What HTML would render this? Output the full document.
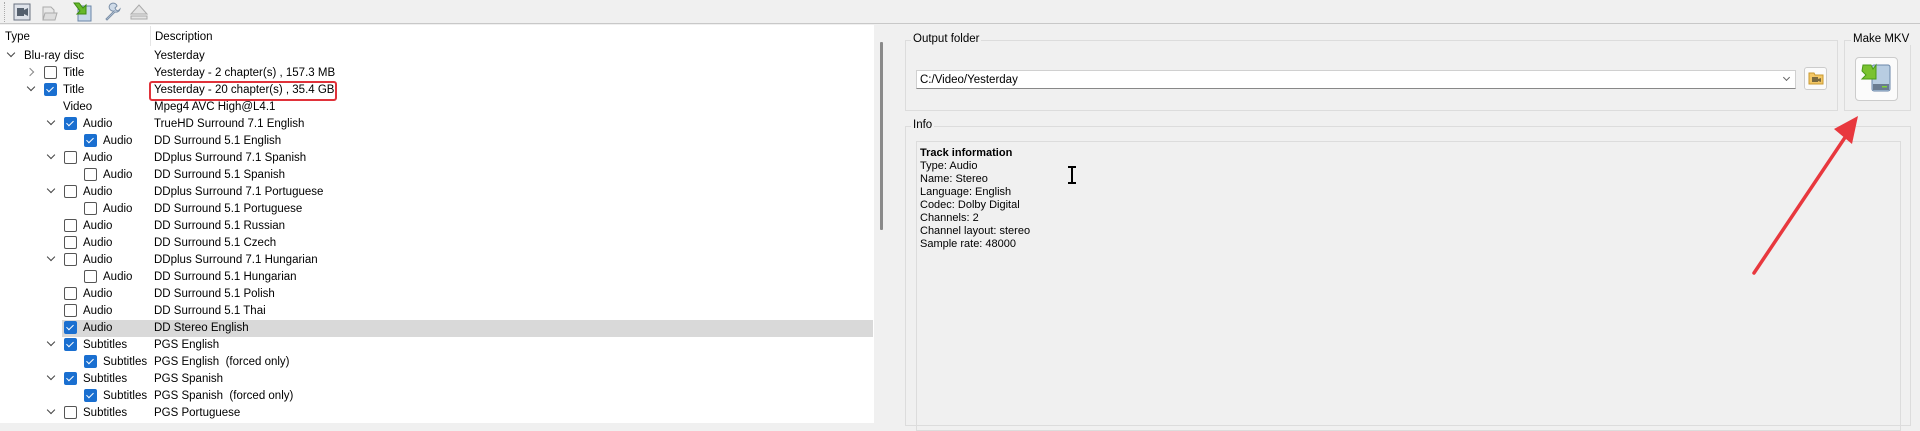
<!DOCTYPE html>
<html><head><meta charset="utf-8"><style>
*{margin:0;padding:0;box-sizing:border-box}
body{width:1920px;height:423px;overflow:hidden;background:#f0f0f0;font-family:"Liberation Sans",sans-serif;font-size:11.5px;color:#000;position:relative}
.a{position:absolute;white-space:nowrap}
.cb{position:absolute;width:13px;height:13px;border:1px solid #555;border-radius:2px;background:#fff;margin-top:-2px}
.cb.c{background:#1a6fd0;border-color:#1a6fd0}
.cb.c:after{content:"";position:absolute;left:3px;top:1px;width:3px;height:6px;border:solid #fff;border-width:0 1.5px 1.5px 0;transform:rotate(45deg)}
.chv{position:absolute;width:6px;height:6px;border:solid #444;border-width:0 1.3px 1.3px 0;transform:rotate(45deg)}
.chr{position:absolute;width:6px;height:6px;border:solid #888;border-width:0 1.3px 1.3px 0;transform:rotate(-45deg)}
.grp{position:absolute;border:1px solid #dcdcdc}
.lbl{position:absolute;background:#f0f0f0;padding:0 2px}
</style></head><body>
<div class="a" style="left:0;top:0;width:1920px;height:24px;background:#f0f0f0;border-bottom:1px solid #c8c8c8"></div>
<div class="a" style="left:4px;top:2px;width:1px;height:20px;border-left:1px dotted #aaa"></div>
<svg class="a" style="left:12px;top:1px" width="160" height="22">
<rect x="2" y="3" width="16" height="16" fill="#dfe3ea" stroke="#6a7280"/><rect x="5" y="7" width="7" height="8" fill="#55606e"/><path d="M12 9l4-2v8l-4-2z" fill="#55606e"/>
<path d="M31 6h8l3 3v10h-11z" fill="#e8e8e8" stroke="#aaa"/><path d="M33 12h12l-2 7h-12z" fill="#ddd" stroke="#aaa"/>
<rect x="66" y="5" width="13" height="15" fill="#c8d8ea" stroke="#6a86a8"/><path d="M62 2l5 0 4 5 3-3v9h-9l3-3z" fill="#66b82a" stroke="#3c8a10"/>
<path d="M94 18l8-8a4 4 0 1 1 3 -5l-2 2 1 2 2 1 2-2a4 4 0 0 1-5 3l-8 8z" fill="#cfdbe8" stroke="#7c90a8"/>
<path d="M119 13l8-9 8 9z" fill="#e4e4e4" stroke="#aaa"/><rect x="119" y="15" width="16" height="3" fill="#e4e4e4" stroke="#aaa"/>
</svg>
<div class="a" style="left:0;top:25px;width:890px;height:398px;background:#fff;border-right:1px solid #a0a0a0"></div>
<div class="a" style="left:874px;top:25px;width:16px;height:398px;background:#f0f0f0"></div>
<div class="a" style="left:880px;top:42px;width:3px;height:188px;background:#8a8a8a;border-radius:1px"></div>
<div class="a" style="left:150px;top:26px;width:1px;height:20px;background:#e5e5e5"></div>
<div class="a" style="left:5px;top:31px">Type</div>
<div class="a" style="left:155px;top:31px">Description</div>
<div class="a" style="left:62px;top:320px;width:811px;height:17px;background:#d9d9d9"></div>
<div class="a" style="left:149px;top:81px;width:188px;height:20px;border:2.5px solid #e0323a;border-radius:3px"></div>

<div class="chv" style="left:8px;top:50px"></div><div class="a" style="left:24px;top:50px">Blu-ray disc</div><div class="a" style="left:154px;top:50px">Yesterday</div>
<div class="chr" style="left:27px;top:69px"></div><div class="cb" style="left:44px;top:68px"></div><div class="a" style="left:63px;top:67px">Title</div><div class="a" style="left:154px;top:67px">Yesterday - 2 chapter(s) , 157.3 MB</div>
<div class="chv" style="left:28px;top:84px"></div><div class="cb c" style="left:44px;top:85px"></div><div class="a" style="left:63px;top:84px">Title</div><div class="a" style="left:154px;top:84px">Yesterday - 20 chapter(s) , 35.4 GB</div>
<div class="a" style="left:63px;top:101px">Video</div><div class="a" style="left:154px;top:101px">Mpeg4 AVC High@L4.1</div>

<div class="chv" style="left:48px;top:118px"></div><div class="cb c" style="left:64px;top:119px"></div><div class="a" style="left:83px;top:118px">Audio</div><div class="a" style="left:154px;top:118px">TrueHD Surround 7.1 English</div>
<div class="cb c" style="left:84px;top:136px"></div><div class="a" style="left:103px;top:135px">Audio</div><div class="a" style="left:154px;top:135px">DD Surround 5.1 English</div>
<div class="chv" style="left:48px;top:152px"></div><div class="cb" style="left:64px;top:153px"></div><div class="a" style="left:83px;top:152px">Audio</div><div class="a" style="left:154px;top:152px">DDplus Surround 7.1 Spanish</div>
<div class="cb" style="left:84px;top:170px"></div><div class="a" style="left:103px;top:169px">Audio</div><div class="a" style="left:154px;top:169px">DD Surround 5.1 Spanish</div>
<div class="chv" style="left:48px;top:186px"></div><div class="cb" style="left:64px;top:187px"></div><div class="a" style="left:83px;top:186px">Audio</div><div class="a" style="left:154px;top:186px">DDplus Surround 7.1 Portuguese</div>
<div class="cb" style="left:84px;top:204px"></div><div class="a" style="left:103px;top:203px">Audio</div><div class="a" style="left:154px;top:203px">DD Surround 5.1 Portuguese</div>
<div class="cb" style="left:64px;top:221px"></div><div class="a" style="left:83px;top:220px">Audio</div><div class="a" style="left:154px;top:220px">DD Surround 5.1 Russian</div>
<div class="cb" style="left:64px;top:238px"></div><div class="a" style="left:83px;top:237px">Audio</div><div class="a" style="left:154px;top:237px">DD Surround 5.1 Czech</div>
<div class="chv" style="left:48px;top:254px"></div><div class="cb" style="left:64px;top:255px"></div><div class="a" style="left:83px;top:254px">Audio</div><div class="a" style="left:154px;top:254px">DDplus Surround 7.1 Hungarian</div>
<div class="cb" style="left:84px;top:272px"></div><div class="a" style="left:103px;top:271px">Audio</div><div class="a" style="left:154px;top:271px">DD Surround 5.1 Hungarian</div>
<div class="cb" style="left:64px;top:289px"></div><div class="a" style="left:83px;top:288px">Audio</div><div class="a" style="left:154px;top:288px">DD Surround 5.1 Polish</div>
<div class="cb" style="left:64px;top:306px"></div><div class="a" style="left:83px;top:305px">Audio</div><div class="a" style="left:154px;top:305px">DD Surround 5.1 Thai</div>
<div class="cb c" style="left:64px;top:323px"></div><div class="a" style="left:83px;top:322px">Audio</div><div class="a" style="left:154px;top:322px">DD Stereo English</div>
<div class="chv" style="left:48px;top:339px"></div><div class="cb c" style="left:64px;top:340px"></div><div class="a" style="left:83px;top:339px">Subtitles</div><div class="a" style="left:154px;top:339px">PGS English</div>
<div class="cb c" style="left:84px;top:357px"></div><div class="a" style="left:103px;top:356px">Subtitles</div><div class="a" style="left:154px;top:356px">PGS English&nbsp; (forced only)</div>
<div class="chv" style="left:48px;top:373px"></div><div class="cb c" style="left:64px;top:374px"></div><div class="a" style="left:83px;top:373px">Subtitles</div><div class="a" style="left:154px;top:373px">PGS Spanish</div>
<div class="cb c" style="left:84px;top:391px"></div><div class="a" style="left:103px;top:390px">Subtitles</div><div class="a" style="left:154px;top:390px">PGS Spanish&nbsp; (forced only)</div>
<div class="chv" style="left:48px;top:407px"></div><div class="cb" style="left:64px;top:408px"></div><div class="a" style="left:83px;top:407px">Subtitles</div><div class="a" style="left:154px;top:407px">PGS Portuguese</div>

<div class="grp" style="left:905px;top:40px;width:933px;height:71px"></div>
<div class="lbl a" style="left:911px;top:33px">Output folder</div>
<div class="a" style="left:916px;top:70px;width:880px;height:19px;background:#fff;border:1px solid #d0d0d0;border-bottom-color:#888"></div>
<div class="a" style="left:920px;top:74px">C:/Video/Yesterday</div>
<div class="a" style="left:1784px;top:75px;width:5px;height:5px;border:solid #666;border-width:0 1px 1px 0;transform:rotate(45deg)"></div>
<div class="a" style="left:1804px;top:67px;width:23px;height:23px;background:#fbfbfb;border:1px solid #ccc;border-radius:3px"></div>
<svg class="a" style="left:1808px;top:71px" width="16" height="14"><path d="M1 2h5l1 2h8v9h-14z" fill="#f3c766" stroke="#c89a30"/><rect x="4" y="6" width="6" height="5" fill="#7a6a40"/><path d="M10 8l3-1v4l-3-1z" fill="#7a6a40"/></svg>

<div class="grp" style="left:1844px;top:40px;width:67px;height:71px"></div>
<div class="lbl a" style="left:1851px;top:33px">Make MKV</div>
<div class="a" style="left:1855px;top:57px;width:43px;height:44px;background:#fbfbfb;border:1px solid #ccc;border-radius:4px"></div>
<svg class="a" style="left:1860px;top:62px" width="34" height="34"><rect x="12" y="3" width="18" height="26" rx="2" fill="#b8cde2" stroke="#6a86a8"/><rect x="13" y="22" width="16" height="6" fill="#6a7c90"/><rect x="22" y="24" width="5" height="1.5" fill="#7fd23a"/><path d="M3 3h8l2 4 3-4v14h-14l4-4-4-4z" fill="#7ac230" stroke="#4a9a18"/></svg>

<div class="grp" style="left:905px;top:126px;width:1006px;height:300px"></div>
<div class="lbl a" style="left:911px;top:119px">Info</div>
<div class="a" style="left:916px;top:141px;width:985px;height:290px;border:1px solid #dcdcdc"></div>
<div class="a" style="left:920px;top:147px;line-height:13px;font-size:11px">
<b>Track information</b><br>Type: Audio<br>Name: Stereo<br>Language: English<br>Codec: Dolby Digital<br>Channels: 2<br>Channel layout: stereo<br>Sample rate: 48000</div>
<svg class="a" style="left:1066px;top:166px" width="12" height="20"><path d="M2 1h8M6 1v16M2 17h8" stroke="#000" stroke-width="2" fill="none"/></svg>
<svg class="a" style="left:1740px;top:105px" width="130" height="180"><line x1="14" y1="168" x2="110" y2="25" stroke="#e8383e" stroke-width="3.5" stroke-linecap="round"/><path d="M118 11l-24 13 18 15z" fill="#e8383e"/></svg>
</body></html>
